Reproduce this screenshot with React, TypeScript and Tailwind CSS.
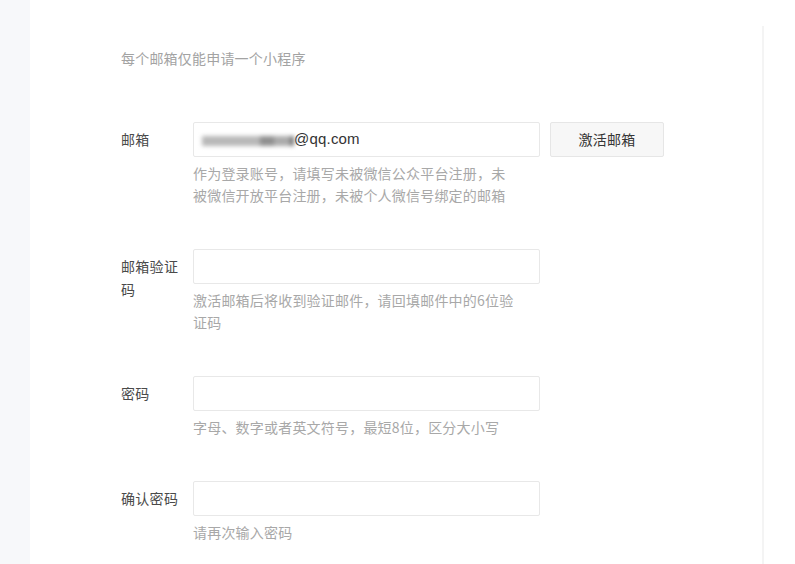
import React from 'react';

interface Field {
  label: string;
  hint: string;
  value?: boolean;
  action?: string;
}

const fields: Field[] = [
  {
    label: '邮箱',
    hint: '作为登录账号，请填写未被微信公众平台注册，未被微信开放平台注册，未被个人微信号绑定的邮箱',
    value: true,
    action: '激活邮箱',
  },
  {
    label: '邮箱验证码',
    hint: '激活邮箱后将收到验证邮件，请回填邮件中的6位验证码',
  },
  {
    label: '密码',
    hint: '字母、数字或者英文符号，最短8位，区分大小写',
  },
  {
    label: '确认密码',
    hint: '请再次输入密码',
  },
];

const font = { fontFamily: '"Noto Sans CJK SC", "Noto Sans", sans-serif' };

export default function App() {
  return (
    <div className="flex h-[564px] w-[795px] overflow-hidden bg-white" style={font}>
      {/* Left rail */}
      <div className="w-[30px] shrink-0 bg-[#f7f8fa]" />

      {/* Main area */}
      <div className="flex-1">
        <div className="mt-[22px] h-full w-[734px] border-r-2 border-[#f4f4f4] pl-[91px]">
          <p className="mt-[26px] pt-[21px] text-[14px] leading-[22px] tracking-[0.2px] text-[#a3a3a3]">
            每个邮箱仅能申请一个小程序
          </p>

          <div className="mt-[53px] flex flex-col">
            {fields.map((f, idx) => (
              <div key={idx} className="flex pb-[43px]">
                <label className="mr-[8px] w-[64px] shrink-0 pt-[6px] text-[14px] leading-[23px] tracking-[0.3px] text-[#4a4a4a]">
                  {f.label}
                </label>
                <div className="flex flex-col">
                  <div className="flex items-center gap-[10px]">
                    <div className="flex h-[35px] w-[347px] items-center rounded-[2px] border border-[#e8e8e8] bg-white px-[8px]">
                      {f.value && (
                        <span className="flex items-center">
                          <span className="flex h-[11px] items-center pt-[2px] blur-[2px]">
                            <span className="h-[10px] w-[58px] bg-[#b8b8b8]" />
                            <span className="h-[10px] w-[14px] bg-[#909090]" />
                            <span className="h-[10px] w-[16px] bg-[#ababab]" />
                            <span className="h-[10px] w-[4px] bg-[#777]" />
                          </span>
                          <span
                            className="text-[15px] tracking-[0.2px] text-[#333]"
                            style={{ fontFamily: '"Liberation Sans", Arial, sans-serif' }}
                          >
                            @qq.com
                          </span>
                        </span>
                      )}
                    </div>
                    {f.action && (
                      <button className="h-[35px] w-[114px] rounded-[2px] border border-[#e6e6e6] bg-[#f7f7f7] text-[14px] tracking-[0.3px] text-[#353535]">
                        {f.action}
                      </button>
                    )}
                  </div>
                  <p className="mt-[5px] w-[326px] text-[14px] leading-[22px] tracking-[0.2px] text-[#a8a8a8]">
                    {f.hint}
                  </p>
                </div>
              </div>
            ))}
          </div>
        </div>
      </div>
    </div>
  );
}
